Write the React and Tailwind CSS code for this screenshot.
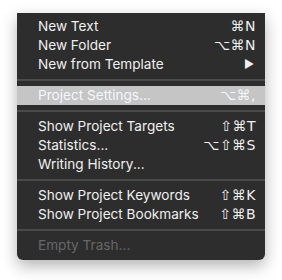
import React from 'react';

const groups = [
    [
        { label: 'New Text', keys: '⌘N' },
        { label: 'New Folder', keys: '⌥⌘N' },
        { label: 'New from Template', arrow: true },
    ],
    [{ label: 'Project Settings...', keys: '⌥⌘,', active: true }],
    [
        { label: 'Show Project Targets', keys: '⇧⌘T' },
        { label: 'Statistics...', keys: '⌥⇧⌘S' },
        { label: 'Writing History...' },
    ],
    [
        { label: 'Show Project Keywords', keys: '⇧⌘K' },
        { label: 'Show Project Bookmarks', keys: '⇧⌘B' },
    ],
    [{ label: 'Empty Trash...', disabled: true }],
];

const MenuRow = ({ item }) => (
    <div
        className={`flex items-center justify-between h-[19px] pl-[21px] pr-[9px] text-[13.6px] ${
            item.active ? 'bg-[#c5c5c5] text-[#f4f7fb]' : item.disabled ? 'text-[#676767]' : 'text-[#f0f0f0]'
        }`}
    >
        <span>{item.label}</span>
        {item.keys && (
            <span className="font-['DejaVu_Sans',sans-serif] text-[14px] tracking-[0.5px]">{item.keys}</span>
        )}
        {item.arrow && <span className="text-[11px] pr-[2px]">▶</span>}
    </div>
);

const App = () => {
    return (
        <div className="w-[282px] h-[280px] bg-white font-['Inter','Liberation_Sans',sans-serif]">
            <div className="pt-[13px] pl-[17px]">
                <div className="w-[248px] bg-[#2d2d2d] rounded-b-[6px] pt-[4px] pb-[5px] shadow-[0_6px_16px_rgba(0,0,0,0.3)]">
                    {groups.map((group, gi) => (
                        <div key={gi}>
                            {gi > 0 && <div className="h-[2px] my-[5px] bg-[#4a4a4a]" />}
                            {group.map((item) => (
                                <MenuRow key={item.label} item={item} />
                            ))}
                        </div>
                    ))}
                </div>
            </div>
        </div>
    );
};

export default App;
